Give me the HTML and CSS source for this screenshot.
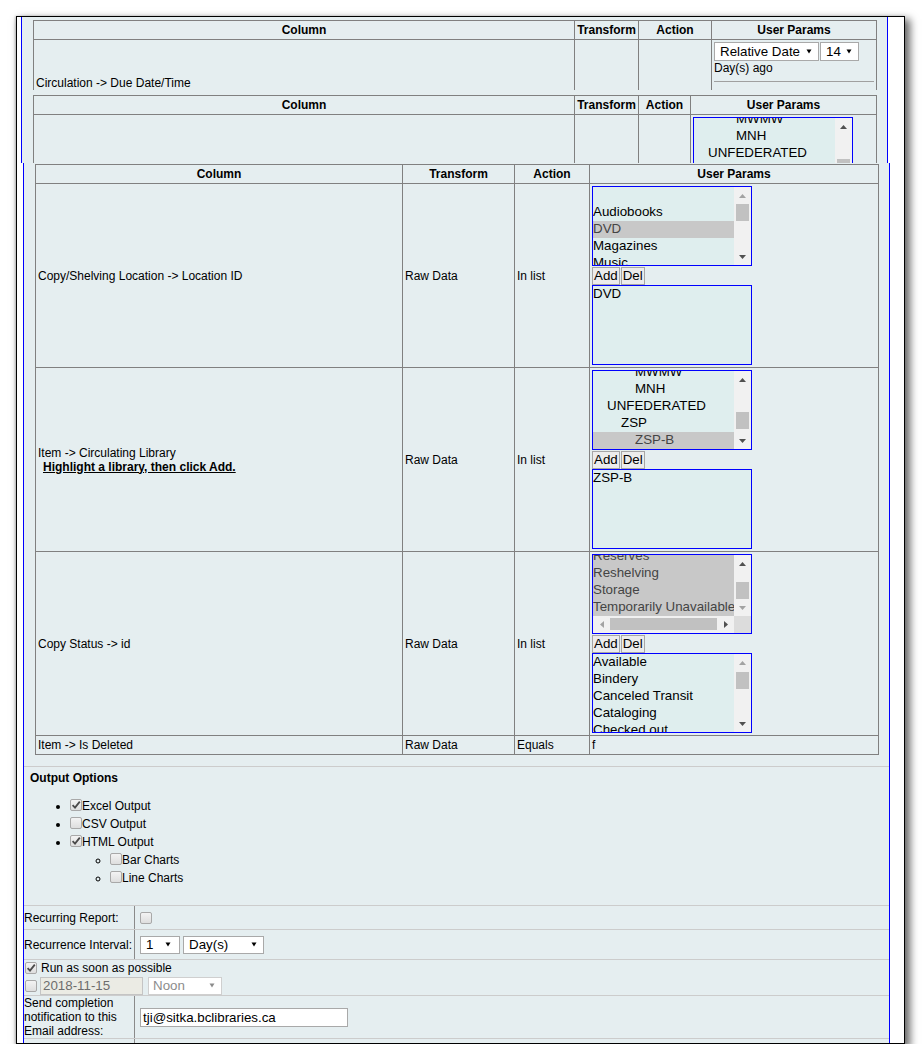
FILE: index.html
```html
<!DOCTYPE html>
<html>
<head>
<meta charset="utf-8">
<title>Report template</title>
<link rel="stylesheet" href="styles.css">
</head>
<body>
<div class="frame">
  <div class="sec-a">
    <div class="clip1">
      <table class="grid">
        <colgroup><col class="w541"><col class="w64"><col class="w73"><col class="w165"></colgroup>
        <tr><th>Column</th><th>Transform</th><th>Action</th><th>User Params</th></tr>
        <tr>
          <td>Circulation -&gt; Due Date/Time</td><td></td><td></td>
          <td class="top">
            <div class="selrow">
              <span class="sel w-rel">Relative Date<svg class="dd" width="6" height="5" viewBox="0 0 6 5"><path d="M0.5 0.5H5.5L3 4.5z"/></svg></span>
              <span class="sel w-14">14<svg class="dd" width="6" height="5" viewBox="0 0 6 5"><path d="M0.5 0.5H5.5L3 4.5z"/></svg></span>
            </div>
            <div class="dago">Day(s) ago</div>
            <div class="rule"></div>
            <div class="spacer"></div>
          </td>
        </tr>
      </table>
    </div>
    <table class="grid t2">
      <colgroup><col class="w541"><col class="w64"><col class="w52"><col class="w186"></colgroup>
      <tr><th>Column</th><th>Transform</th><th>Action</th><th>User Params</th></tr>
      <tr>
        <td>Item -&gt; Circulating Library</td><td>Raw Data</td><td>In list</td>
        <td>
          <div class="lb">
            <div class="lb-list">
              <div class="opt i3 cut">MWMW</div>
              <div class="opt i3">MNH</div>
              <div class="opt i1">UNFEDERATED</div>
              <div class="opt i2">ZSP</div>
              <div class="opt i3 on">ZSP-B</div>
            </div>
            <div class="vs">
              <div class="arr"><svg class="ar" width="7" height="4" viewBox="0 0 7 4"><path d="M3.5 0L7 4H0z"/></svg></div>
              <div class="track"><div class="thumb t24"></div></div>
              <div class="arr"><svg class="ar" width="7" height="4" viewBox="0 0 7 4"><path d="M0 0H7L3.5 4z"/></svg></div>
            </div>
          </div>
          <div class="btns"><span class="btn">Add</span><span class="btn">Del</span></div>
          <div class="lb">
            <div class="lb-list"><div class="opt">ZSP-B</div></div>
          </div>
        </td>
      </tr>
    </table>
  </div>

  <div class="sec-b">
    <table class="grid t3">
      <colgroup><col class="w367"><col class="w112"><col class="w75"><col class="w289"></colgroup>
      <tr><th>Column</th><th>Transform</th><th>Action</th><th>User Params</th></tr>
      <tr>
        <td>Copy/Shelving Location -&gt; Location ID</td><td>Raw Data</td><td>In list</td>
        <td>
          <div class="lb">
            <div class="lb-list">
              <div class="opt"></div>
              <div class="opt">Audiobooks</div>
              <div class="opt on">DVD</div>
              <div class="opt">Magazines</div>
              <div class="opt">Music</div>
            </div>
            <div class="vs">
              <div class="arr"><svg class="ar dim" width="7" height="4" viewBox="0 0 7 4"><path d="M3.5 0L7 4H0z"/></svg></div>
              <div class="track"><div class="thumb"></div></div>
              <div class="arr"><svg class="ar" width="7" height="4" viewBox="0 0 7 4"><path d="M0 0H7L3.5 4z"/></svg></div>
            </div>
          </div>
          <div class="btns"><span class="btn">Add</span><span class="btn">Del</span></div>
          <div class="lb">
            <div class="lb-list"><div class="opt">DVD</div></div>
          </div>
        </td>
      </tr>
      <tr>
        <td>Item -&gt; Circulating Library<br><b class="hint">Highlight a library, then click Add.</b></td><td>Raw Data</td><td>In list</td>
        <td>
          <div class="lb">
            <div class="lb-list">
              <div class="opt i3 cut">MWMW</div>
              <div class="opt i3">MNH</div>
              <div class="opt i1">UNFEDERATED</div>
              <div class="opt i2">ZSP</div>
              <div class="opt i3 on">ZSP-B</div>
            </div>
            <div class="vs">
              <div class="arr"><svg class="ar" width="7" height="4" viewBox="0 0 7 4"><path d="M3.5 0L7 4H0z"/></svg></div>
              <div class="track"><div class="thumb t24"></div></div>
              <div class="arr"><svg class="ar" width="7" height="4" viewBox="0 0 7 4"><path d="M0 0H7L3.5 4z"/></svg></div>
            </div>
          </div>
          <div class="btns"><span class="btn">Add</span><span class="btn">Del</span></div>
          <div class="lb">
            <div class="lb-list"><div class="opt">ZSP-B</div></div>
          </div>
        </td>
      </tr>
      <tr>
        <td>Copy Status -&gt; id</td><td>Raw Data</td><td>In list</td>
        <td>
          <div class="lb hx">
            <div class="lb-list">
              <div class="opt on cut">Reserves</div>
              <div class="opt on">Reshelving</div>
              <div class="opt on">Storage</div>
              <div class="opt on">Temporarily Unavailable</div>
            </div>
            <div class="vs">
              <div class="arr"><svg class="ar" width="7" height="4" viewBox="0 0 7 4"><path d="M3.5 0L7 4H0z"/></svg></div>
              <div class="track"><div class="thumb t10"></div></div>
              <div class="arr"><svg class="ar dim" width="7" height="4" viewBox="0 0 7 4"><path d="M0 0H7L3.5 4z"/></svg></div>
            </div>
            <div class="hs">
              <div class="arr h"><svg class="ar dim" width="4" height="7" viewBox="0 0 4 7"><path d="M0 3.5L4 0V7z"/></svg></div>
              <div class="hthumb"></div>
              <div class="arr h"><svg class="ar" width="4" height="7" viewBox="0 0 4 7"><path d="M4 3.5L0 0V7z"/></svg></div>
            </div>
            <div class="corner"></div>
          </div>
          <div class="btns"><span class="btn">Add</span><span class="btn">Del</span></div>
          <div class="lb">
            <div class="lb-list">
              <div class="opt">Available</div>
              <div class="opt">Bindery</div>
              <div class="opt">Canceled Transit</div>
              <div class="opt">Cataloging</div>
              <div class="opt">Checked out</div>
            </div>
            <div class="vs">
              <div class="arr"><svg class="ar dim" width="7" height="4" viewBox="0 0 7 4"><path d="M3.5 0L7 4H0z"/></svg></div>
              <div class="track"><div class="thumb t1"></div></div>
              <div class="arr"><svg class="ar" width="7" height="4" viewBox="0 0 7 4"><path d="M0 0H7L3.5 4z"/></svg></div>
            </div>
          </div>
        </td>
      </tr>
      <tr>
        <td>Item -&gt; Is Deleted</td><td>Raw Data</td><td>Equals</td><td>f</td>
      </tr>
    </table>

    <div class="opts">
      <div class="outopt">
        <div class="oo-title">Output Options</div>
        <ul class="oo-list">
          <li><span class="cb"><svg width="10" height="10" viewBox="0 0 10 10"><path d="M1.6 5.2L4 7.6L8.8 1.6"/></svg></span>Excel Output</li>
          <li><span class="cb"></span>CSV Output</li>
          <li><span class="cb"><svg width="10" height="10" viewBox="0 0 10 10"><path d="M1.6 5.2L4 7.6L8.8 1.6"/></svg></span>HTML Output
            <ul class="oo-sub">
              <li><span class="cb"></span>Bar Charts</li>
              <li><span class="cb"></span>Line Charts</li>
            </ul>
          </li>
        </ul>
      </div>

      <div class="frow r-rec">
        <div class="lbl">Recurring Report:</div>
        <div class="val"><span class="cb"></span></div>
      </div>
      <div class="frow r-int">
        <div class="lbl">Recurrence Interval:</div>
        <div class="val">
          <span class="sel s18 w-1">1<svg class="dd" width="6" height="5" viewBox="0 0 6 5"><path d="M0.5 0.5H5.5L3 4.5z"/></svg></span>
          <span class="sel s18 w-day">Day(s)<svg class="dd" width="6" height="5" viewBox="0 0 6 5"><path d="M0.5 0.5H5.5L3 4.5z"/></svg></span>
        </div>
      </div>
      <div class="fullrow r-asap">
        <div class="asap1"><span class="cb"><svg width="10" height="10" viewBox="0 0 10 10"><path d="M1.6 5.2L4 7.6L8.8 1.6"/></svg></span>Run as soon as possible</div>
        <div class="asap2">
          <span class="cb"></span>
          <span class="datein">2018-11-15</span>
          <span class="sel s18 w-noon off">Noon<svg class="dd" width="6" height="5" viewBox="0 0 6 5"><path d="M0.5 0.5H5.5L3 4.5z"/></svg></span>
        </div>
      </div>
      <div class="frow r-mail">
        <div class="lbl">Send completion notification to this Email address:</div>
        <div class="val"><span class="textin">tji@sitka.bclibraries.ca</span></div>
      </div>
      <div class="frow r-last">
        <div class="lbl"></div>
        <div class="val"></div>
      </div>
    </div>
  </div>
</div>
</body>
</html>
```

FILE: styles.css
```css
* { box-sizing: border-box; }
html, body { margin: 0; padding: 0; background: #fff; }
body {
  font-family: "Liberation Sans", Arial, sans-serif;
  font-size: 12px;
  color: #000;
}

.frame {
  margin: 16px 0 0 16px;
  width: 889px;
  height: 1028px;
  border: 1px solid #000;
  background: #fff;
  overflow: hidden;
  box-shadow: 4px 4px 8px 1px rgba(0, 0, 0, 0.6), -1px 0 2px rgba(0, 0, 0, 0.2);
}

.sec-a {
  margin-left: 4px;
  width: 867px;
  height: 146px;
  overflow: hidden;
  background: #e5eef0;
  border-left: 1px solid #0000ff;
  border-right: 1px solid #0000ff;
  padding-top: 3px;
}
.clip1 {
  height: 70px;
  overflow: hidden;
  margin: 0 0 5px 11px;
}
.t2 { margin-left: 11px; }

.sec-b {
  margin-left: 6px;
  width: 867px;
  height: 880px;
  overflow: hidden;
  background: #e5eef0;
  border-left: 1px solid #0000ff;
  border-right: 1px solid #0000ff;
  padding-top: 1px;
}
.t3 { margin-left: 11px; }

/* tables */
.grid {
  border-collapse: collapse;
  table-layout: fixed;
  width: 844px;
}
.grid th, .grid td {
  border: 1px solid #808080;
  padding: 2px;
  font-size: 12px;
  line-height: 14px;
}
.grid th { font-weight: bold; text-align: center; }
.grid td { text-align: left; vertical-align: middle; }
.grid td.top { vertical-align: top; }

.w541 { width: 541px; }
.w64 { width: 64px; }
.w73 { width: 73px; }
.w165 { width: 165px; }
.w52 { width: 52px; }
.w186 { width: 186px; }
.w367 { width: 367px; }
.w112 { width: 112px; }
.w75 { width: 75px; }
.w289 { width: 289px; }

.hint { text-decoration: underline; margin-left: 5px; }

/* selects */
.selrow { display: flex; gap: 0; }
.sel {
  display: inline-flex;
  align-items: center;
  height: 19px;
  border: 1px solid #a9a9a9;
  background: #fff;
  font-size: 13.333px;
  padding: 0 6px 0 5px;
  white-space: nowrap;
}
.sel.s18 { height: 18px; }
.sel .dd { margin-left: auto; fill: #000; flex: none; }
.sel.off { color: #8c8c8c; border-color: #cfcfcf; padding-left: 4px; }
.sel.off .dd { fill: #8c8c8c; }
.w-rel { width: 105px; }
.w-14 { width: 39px; margin-left: 1px; }
.w-1 { width: 40px; padding-right: 8px; }
.w-day { width: 81px; }
.w-noon { width: 74px; }

.dago { line-height: 14px; }
.rule { margin-top: 6px; width: 160px; border-top: 1px solid #a0a0a0; }
.spacer { height: 41px; }

/* list boxes */
.lb {
  display: grid;
  grid-template-columns: 1fr auto;
  width: 160px;
  height: 80px;
  border: 1px solid #0000ff;
  background: #dfeeee;
  font-size: 13.333px;
  overflow: hidden;
}
.lb.hx { grid-template-rows: 1fr 17px; }
.lb-list { min-width: 0; overflow: hidden; }
.opt {
  height: 17px;
  line-height: 15px;
  padding: 0 0 2px 0;
  white-space: nowrap;
}
.opt.on { background: #c8c8c8; color: #444; }
.opt.cut { margin-top: -7px; }
.opt.i1 { padding-left: 14px; }
.opt.i2 { padding-left: 28px; }
.opt.i3 { padding-left: 42px; }

.vs {
  width: 17px;
  display: flex;
  flex-direction: column;
  background: #f1f1f1;
}
.arr {
  flex: none;
  height: 17px;
  display: flex;
  align-items: center;
  justify-content: center;
}
.arr.h { width: 17px; }
.ar { fill: #505050; display: block; }
.ar.dim { fill: #a3a3a3; }
.track { flex: 1; min-height: 0; }
.thumb { height: 17px; margin: 0 2px; background: #c1c1c1; }
.thumb.t24 { margin-top: 24px; }
.thumb.t10 { margin-top: 10px; }
.thumb.t1 { margin-top: 1px; }
.hs { display: flex; background: #f1f1f1; height: 17px; }
.hthumb { flex: 1; margin: 2px 0 3px; background: #c1c1c1; }
.corner { background: #dcdcdc; }

.btns { display: flex; gap: 1px; height: 19px; padding-top: 1px; }
.btn {
  height: 18px;
  padding: 0 1px;
  border: 1px solid #a6a6a6;
  background: #ececec;
  font-size: 13.333px;
  line-height: 16px;
}

/* options area */
.opts { margin-top: 11px; }
.outopt {
  border-top: 1px solid #cccccc;
  padding: 4px 6px 6px;
}
.oo-title { font-weight: bold; line-height: 14px; }
.oo-list {
  margin: 12px 0;
  padding-left: 40px;
  line-height: 18px;
  list-style: disc;
}
.oo-sub { margin: 0; padding-left: 40px; list-style: circle; }

.cb {
  display: inline-block;
  width: 12px;
  height: 12px;
  border: 1px solid #a8a8a8;
  border-radius: 2px;
  background: linear-gradient(#f3f3f3, #dedede);
  vertical-align: -1px;
}
.cb svg { display: block; fill: none; stroke: #4a4a4a; stroke-width: 1.8; }

.frow {
  display: grid;
  grid-template-columns: 110px 1fr;
  border-top: 1px solid #cccccc;
}
.lbl { display: flex; align-items: center; line-height: 14px; }
.val {
  border-left: 1px solid #8a8a8a;
  padding-left: 5px;
  display: flex;
  align-items: center;
  gap: 3px;
}
.r-rec { height: 24px; }
.r-int { height: 30px; }
.r-mail { height: 43px; }
.r-last { height: 20px; }

.fullrow { border-top: 1px solid #cccccc; height: 36px; padding-left: 1px; }
.asap1 { display: flex; align-items: center; height: 16px; }
.asap1 .cb { margin-right: 4px; }
.asap2 { display: flex; align-items: center; height: 19px; }
.asap2 .cb { margin-right: 3px; }
.datein {
  display: inline-flex;
  align-items: center;
  width: 103px;
  height: 18px;
  border: 1px solid #c4c4c4;
  background: #ebebe4;
  color: #6d6d6d;
  font-size: 13.333px;
  padding-left: 2px;
  margin-right: 5px;
}
.textin {
  display: inline-flex;
  align-items: center;
  width: 208px;
  height: 19px;
  border: 1px solid #a9a9a9;
  background: #fff;
  font-size: 13.333px;
  padding-left: 2px;
}
```
